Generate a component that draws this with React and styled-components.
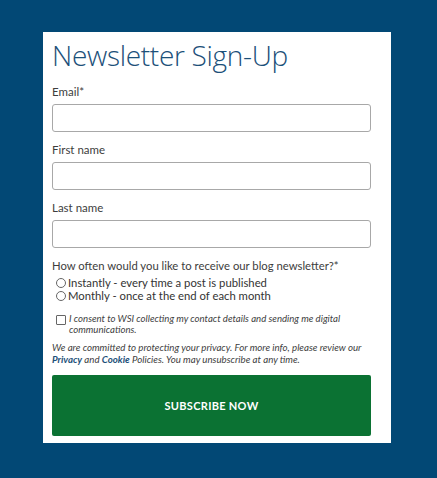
import React from 'react';
import styled, { createGlobalStyle } from 'styled-components';

const GlobalStyle = createGlobalStyle`
    html, body {
        margin: 0;
        padding: 0;
        background: #024875;
    }
    body {
        font-family: Lato, "Liberation Sans", sans-serif;
    }
`;

const Page = styled.div`
    min-height: 478px;
    padding: 32px 0 0 43px;
    box-sizing: border-box;
`;

const Card = styled.form`
    width: 348px;
    background: #fff;
    box-sizing: border-box;
    padding: 4px 20px 7px 9px;
`;

const Title = styled.h1`
    margin: 0 0 10px;
    font-family: "Open Sans", sans-serif;
    font-weight: 300;
    font-size: 28px;
    line-height: 38px;
    color: #1c5079;
    letter-spacing: -0.3px;
`;

const Field = styled.div`
    margin-bottom: 10px;
`;

const Label = styled.label`
    display: block;
    font-size: 11.5px;
    line-height: 15px;
    color: #3d3d3d;
    margin-bottom: 5px;
`;

const Input = styled.input`
    display: block;
    width: 100%;
    height: 28px;
    box-sizing: border-box;
    border: 1px solid #a8a8a8;
    border-radius: 3px;
    background: #fff;
`;

const Question = styled.div`
    font-size: 11.3px;
    line-height: 15px;
    color: #3d3d3d;
    margin: 5px 0 3px;
`;

const Option = styled.label`
    display: flex;
    align-items: center;
    font-size: 11.3px;
    line-height: 13px;
    height: 13px;
    color: #333;
`;

const Radio = styled.span`
    width: 8px;
    height: 8px;
    border: 1px solid #666;
    border-radius: 50%;
    margin: 0 2px 0 4px;
    flex-shrink: 0;
`;

const Consent = styled.label`
    display: flex;
    align-items: flex-start;
    margin: 11px 0 6px;
    font-size: 9.6px;
    line-height: 11px;
    font-style: italic;
    color: #3d3d3d;
`;

const Box = styled.span`
    width: 8px;
    height: 8px;
    border: 1px solid #666;
    border-radius: 1px;
    margin: 2px 3px 0 4px;
    flex-shrink: 0;
`;

const Note = styled.p`
    margin: 0;
    font-size: 9.7px;
    line-height: 12px;
    font-style: italic;
    color: #3d3d3d;
`;

const Link = styled.a`
    color: #1c5079;
    font-weight: 700;
    text-decoration: none;
`;

const Button = styled.button`
    display: block;
    width: 100%;
    height: 61px;
    margin-top: 10px;
    border: none;
    border-radius: 2px;
    background: #0b7233;
    color: #fff;
    font-family: Lato, sans-serif;
    font-weight: 700;
    font-size: 11px;
    letter-spacing: 0.3px;
    text-transform: uppercase;
`;

const fields = [
    { name: 'email', label: 'Email*' },
    { name: 'firstname', label: 'First name' },
    { name: 'lastname', label: 'Last name' },
];

const App = () => (
    <Page>
        <GlobalStyle />
        <Card onSubmit={(e) => e.preventDefault()}>
            <Title>Newsletter Sign-Up</Title>
            {fields.map((f) => (
                <Field key={f.name}>
                    <Label htmlFor={f.name}>{f.label}</Label>
                    <Input id={f.name} />
                </Field>
            ))}
            <Question>How often would you like to receive our blog newsletter?*</Question>
            <Option><Radio />Instantly - every time a post is published</Option>
            <Option><Radio />Monthly - once at the end of each month</Option>
            <Consent>
                <Box />
                <span>I consent to WSI collecting my contact details and sending me digital communications.</span>
            </Consent>
            <Note>
                We are committed to protecting your privacy. For more info, please review our{' '}
                <Link href="#">Privacy</Link> and <Link href="#">Cookie</Link> Policies. You may unsubscribe at any time.
            </Note>
            <Button type="submit">Subscribe Now</Button>
        </Card>
    </Page>
);

export default App;
